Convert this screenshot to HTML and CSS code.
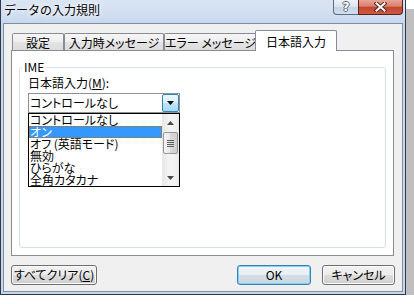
FILE: index.html
```html
<!DOCTYPE html>
<html lang="ja">
<head>
<meta charset="utf-8">
<title>データの入力規則</title>
<link rel="stylesheet" href="styles.css">
</head>
<body>
<div class="window">
  <div class="titlebar">
    <span class="title">データの入力規則</span>
    <div class="caption">
      <span class="cbtn help">?</span>
      <span class="cbtn close">
        <svg width="13" height="10" viewBox="0 0 13 10">
          <path d="M2.5 1.5 L10.5 8.5 M10.5 1.5 L2.5 8.5" stroke="#5a2a22" stroke-width="4" stroke-linecap="square" fill="none"/>
          <path d="M2.5 1.5 L10.5 8.5 M10.5 1.5 L2.5 8.5" stroke="#ffffff" stroke-width="2" stroke-linecap="square" fill="none"/>
        </svg>
      </span>
    </div>
  </div>
  <div class="client">
    <div class="tabs">
      <div class="tab tab-settings">設定</div>
      <div class="tab tab-input">入力時メッセージ</div>
      <div class="tab tab-error">エラー メッセージ</div>
      <div class="tab tab-ime active">日本語入力</div>
    </div>
    <div class="panel">
      <fieldset class="group">
        <legend>IME</legend>
        <div class="field">
          <div class="label">日本語入力(<u>M</u>):</div>
          <div class="combo">
            <span class="combo-text">コントロールなし</span>
            <span class="combo-btn">
              <svg width="7" height="4" viewBox="0 0 7 4"><path d="M0 0 H7 L3.5 4 Z" fill="#000"/></svg>
            </span>
          </div>
          <div class="list">
            <ul class="items">
              <li class="item">コントロールなし</li>
              <li class="item sel">オン</li>
              <li class="item">オフ (英語モード)</li>
              <li class="item">無効</li>
              <li class="item">ひらがな</li>
              <li class="item">全角カタカナ</li>
            </ul>
            <div class="scrollbar">
              <div class="sb-btn">
                <svg width="7" height="4" viewBox="0 0 7 4"><path d="M0 4 H7 L3.5 0 Z" fill="#4a4a4a"/></svg>
              </div>
              <div class="sb-track">
                <div class="thumb">
                  <svg width="7" height="7" viewBox="0 0 7 7">
                    <path d="M0 0.5 H7 M0 2.5 H7 M0 4.5 H7 M0 6.5 H7" stroke="#5f5f5f" stroke-width="1"/>
                  </svg>
                </div>
              </div>
              <div class="sb-btn">
                <svg width="7" height="4" viewBox="0 0 7 4"><path d="M0 0 H7 L3.5 4 Z" fill="#4a4a4a"/></svg>
              </div>
            </div>
          </div>
        </div>
      </fieldset>
    </div>
    <div class="buttons">
      <button class="btn btn-clear">すべてクリア(<u>C</u>)</button>
      <button class="btn btn-ok">OK</button>
      <button class="btn btn-cancel">キャンセル</button>
    </div>
  </div>
</div>
</body>
</html>
```
FILE: styles.css
```css
html, body {
  margin: 0;
  padding: 0;
  background: #ffffff;
}

body {
  font-family: "Noto Sans CJK JP", sans-serif;
  font-size: 12px;
  font-feature-settings: "palt";
  color: #000;
}

.window {
  width: 406px;
  height: 295px;
  box-sizing: border-box;
  border: 1px solid #2e3a48;
  border-top: 0;
  background: linear-gradient(#dbe6f4, #c8d8ed 24px, #c6d7ec);
  box-shadow: 8px 9px 0 #bfbfbf;
  display: flex;
  flex-direction: column;
}

.titlebar {
  height: 23px;
  flex: none;
  display: flex;
  align-items: flex-start;
  padding: 0 2px 0 3px;
}

.title {
  line-height: 20px;
  font-size: 12px;
  font-feature-settings: normal;
  text-shadow: 0 0 4px #ffffff, 0 0 7px #ffffff;
}

.caption {
  margin-left: auto;
  display: flex;
}

.cbtn {
  height: 15px;
  box-sizing: border-box;
  display: flex;
  align-items: center;
  justify-content: center;
  border: 1px solid #5d6d82;
  border-top: 0;
}

.help {
  width: 25px;
  border-right: 0;
  border-radius: 0 0 0 4px;
  background: linear-gradient(#edf2f8, #d9e3ef 50%, #c5d4e6 50%, #d0dded);
  color: #ffffff;
  font-weight: bold;
  font-size: 12px;
  line-height: 14px;
  font-family: "DejaVu Sans", sans-serif;
  text-shadow: 1px 0 #5a6678, -1px 0 #5a6678, 0 1px #5a6678, 0 -1px #5a6678;
}

.close {
  width: 45px;
  border-color: #5b2219;
  border-radius: 0 0 4px 0;
  background: linear-gradient(#e7a598, #d8806d 45%, #c2462f 50%, #cd5a41);
}

.client {
  flex: 1;
  margin: 0 2px 2px;
  border: 1px solid #7f8fa3;
  background: #f0f0f0;
  padding: 6px 8px 6px 7px;
  display: flex;
  flex-direction: column;
}

.tabs {
  display: flex;
  align-items: flex-end;
  height: 20px;
  flex: none;
  padding-left: 1px;
  position: relative;
  z-index: 1;
}

.tab {
  height: 17px;
  box-sizing: border-box;
  border: 1px solid #898c95;
  border-bottom: 0;
  border-radius: 2px 2px 0 0;
  background: linear-gradient(#f6f6f6, #eeeeee 50%, #e4e4e4 50%, #dcdcdc);
  display: flex;
  align-items: center;
  justify-content: center;
  padding-top: 1px;
  white-space: nowrap;
}

.tab-settings { width: 52px; }
.tab-input { width: 100px; }
.tab-error { width: 93px; }

.tab.active {
  width: 82px;
  height: 21px;
  margin: 0 -2px -1px -2px;
  background: #ffffff;
  position: relative;
  z-index: 2;
  padding-top: 0;
}

.panel {
  height: 206px;
  flex: none;
  box-sizing: border-box;
  border: 1px solid #898c95;
  background: #ffffff;
  padding: 10px 7px 7px;
  display: flex;
  flex-direction: column;
}

.group {
  flex: 1;
  margin: 0;
  min-width: 0;
  border: 1px solid #d5dfe5;
  border-radius: 3px;
  padding: 0 0 0 2px;
}

.group legend {
  padding: 0 2px;
  line-height: 12px;
  font-size: 12px;
}

.field {
  margin-left: 6px;
}

.label {
  margin-top: 3px;
  line-height: 14px;
}

.combo {
  margin-top: 3px;
  width: 152px;
  height: 20px;
  box-sizing: border-box;
  border: 1px solid #8e9198;
  background: #ffffff;
  display: flex;
  align-items: center;
}

.combo-text {
  flex: 1;
  padding-left: 1px;
  line-height: 18px;
  white-space: nowrap;
}

.combo-btn {
  width: 17px;
  height: 18px;
  box-sizing: border-box;
  border: 1px solid #3c7fb1;
  border-radius: 2px;
  background: linear-gradient(#eaf6fd, #d9f0fc 50%, #bee6fd 50%, #a7d9f5);
  display: flex;
  align-items: center;
  justify-content: center;
}

.list {
  width: 152px;
  height: 74px;
  box-sizing: border-box;
  border: 1px solid #000000;
  background: #ffffff;
  display: flex;
}

.items {
  flex: 1;
  list-style: none;
  margin: 0;
  padding: 0;
  min-width: 0;
}

.item {
  height: 12px;
  line-height: 12px;
  padding-left: 1px;
  white-space: nowrap;
}

.item.sel {
  background: #3399ff;
  color: #ffffff;
  outline: 1px dotted #cc6600;
  outline-offset: -1px;
}

.scrollbar {
  width: 17px;
  display: flex;
  flex-direction: column;
  background: linear-gradient(90deg, #e6e6e6, #f3f3f3 40%, #f3f3f3 70%, #e9e9e9);
}

.sb-btn {
  height: 17px;
  flex: none;
  display: flex;
  align-items: center;
  justify-content: center;
}

.sb-track {
  flex: 1;
  padding: 1px 1px 0;
}

.thumb {
  height: 22px;
  box-sizing: border-box;
  border: 1px solid #979797;
  border-radius: 2px;
  background: linear-gradient(90deg, #f4f4f4, #e8e8e8 50%, #d9d9d9 50%, #cfcfcf);
  display: flex;
  align-items: center;
  justify-content: center;
}

.buttons {
  display: flex;
  margin-top: 9px;
  margin-right: -1px;
  height: 20px;
  flex: none;
}

.btn {
  height: 20px;
  box-sizing: border-box;
  border: 1px solid #707070;
  border-radius: 3px;
  background: linear-gradient(#f2f2f2, #ebebeb 50%, #dddddd 50%, #cfcfcf);
  box-shadow: inset 0 0 0 1px #fbfbfb;
  font: inherit;
  font-feature-settings: "palt";
  color: #000;
  padding: 0;
  line-height: 18px;
}

.btn-clear { width: 86px; }

.btn-ok {
  width: 74px;
  margin-left: auto;
  border-color: #3c7fb1;
  box-shadow: inset 0 0 0 1px #7fd3f5;
  background: linear-gradient(#f0f5f8, #e7eef3 50%, #d6dfe6 50%, #cbd6de);
}

.btn-cancel {
  width: 73px;
  margin-left: 11px;
}
```
